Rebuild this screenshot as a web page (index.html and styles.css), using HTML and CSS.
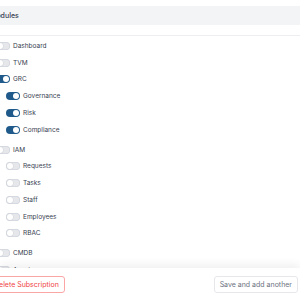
FILE: index.html
```html
<!DOCTYPE html>
<html lang="en">
<head>
    <meta charset="UTF-8">
    <title>Edit Subscription</title>
    <link rel="stylesheet" href="styles.css">
</head>
<body>
    <div class="panel">
        <div class="panel-header">Modules</div>
        <div class="divider"></div>
        <div class="modules">
            <div class="group">
                <label class="row"><span class="toggle"></span>Dashboard</label>
            </div>
            <div class="group">
                <label class="row"><span class="toggle"></span>TVM</label>
            </div>
            <div class="group">
                <label class="row"><span class="toggle on"></span>GRC</label>
                <div class="children">
                    <label class="row"><span class="toggle on"></span>Governance</label>
                    <label class="row"><span class="toggle on"></span>Risk</label>
                    <label class="row"><span class="toggle on"></span>Compliance</label>
                </div>
            </div>
            <div class="group">
                <label class="row"><span class="toggle"></span>IAM</label>
                <div class="children">
                    <label class="row"><span class="toggle"></span>Requests</label>
                    <label class="row"><span class="toggle"></span>Tasks</label>
                    <label class="row"><span class="toggle"></span>Staff</label>
                    <label class="row"><span class="toggle"></span>Employees</label>
                    <label class="row"><span class="toggle"></span>RBAC</label>
                </div>
            </div>
            <div class="group">
                <label class="row"><span class="toggle"></span>CMDB</label>
            </div>
            <div class="group">
                <label class="row"><span class="toggle"></span>Assets</label>
            </div>
        </div>
    </div>

    <div class="footer">
        <button class="btn btn-danger">Delete Subscription</button>
        <button class="btn">Save and add another</button>
    </div>
</body>
</html>
```

FILE: styles.css
```css
body {
    margin: 0;
    font-family: Inter, "Noto Sans", sans-serif;
    color: #374151;
    background: #fff;
    overflow: hidden;
}
.panel {
    margin-left: -14px;
    padding-top: 6px;
}
.panel-header {
    background: #f3f4f6;
    height: 19px;
    line-height: 19px;
    padding-left: 4px;
    font-size: 7px;
    font-weight: 500;
    margin-bottom: 10px;
}
.divider {
    height: 1px;
    background: #eceef1;
}
.modules {
    display: flex;
    flex-direction: column;
    padding-top: 1.5px;
}
.row {
    display: flex;
    align-items: center;
    gap: 3px;
    height: 16.75px;
    padding-left: 10px;
    font-size: 6.5px;
    color: #374151;
}
.children {
    display: flex;
    flex-direction: column;
    padding-left: 10px;
    margin-bottom: 3.25px;
}
.toggle {
    position: relative;
    width: 14px;
    height: 8px;
    border-radius: 4px;
    background: #e5e7eb;
    box-shadow: inset 0 0 0 0.75px #d1d5db;
    flex-shrink: 0;
}
.toggle::after {
    content: "";
    position: absolute;
    top: 1px;
    left: 1px;
    width: 6px;
    height: 6px;
    border-radius: 50%;
    background: #fff;
    box-shadow: 0 0 0 0.5px #d1d5db;
}
.toggle.on {
    background: #1f5a8a;
    box-shadow: none;
}
.toggle.on::after {
    left: 7px;
    box-shadow: none;
}
.footer {
    position: fixed;
    left: 0;
    right: 0;
    bottom: 0;
    height: 32px;
    background: #fff;
    box-shadow: 0 -4px 8px rgba(0, 0, 0, 0.06);
    display: flex;
    justify-content: space-between;
    align-items: center;
    padding: 0 2px 0 0;
}
.btn {
    height: 17px;
    padding: 0 5px;
    font-family: inherit;
    font-size: 7px;
    color: #6b7280;
    background: #fff;
    border: 1px solid #e5e7eb;
    border-radius: 3px;
}
.btn-danger {
    margin-left: -12px;
    color: #ef4444;
    border-color: #fca5a5;
}
```
